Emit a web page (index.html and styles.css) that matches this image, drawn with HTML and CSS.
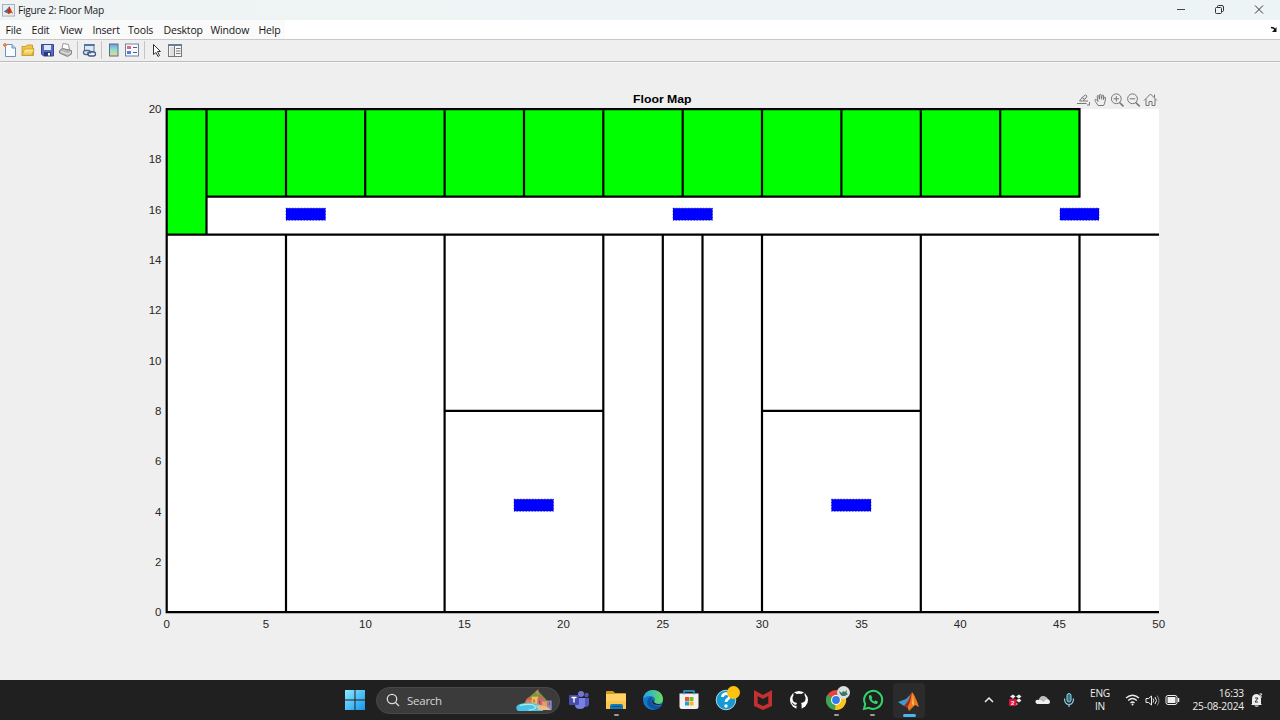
FILE: index.html
```html
<!DOCTYPE html>
<html lang="en">
<head>
<meta charset="utf-8">
<title>Figure 2: Floor Map</title>
<link rel="stylesheet" href="styles.css">
</head>
<body>
<div class="screen">
<header class="titlebar">
  <svg class="app-icon" viewBox="0 0 14 14"><rect x=".5" y=".5" width="13" height="12.5" fill="#e8edf2" stroke="#a5adb7"/><path d="M2 8l3-2 3-3.5L5.5 10z" fill="#376faa"/><path d="M5 9l3-6.500 4 8-2-1-3 1.500z" fill="#cf4a18"/><path d="M8 2.500L7 9l1 1z" fill="#7e2119"/></svg>
  <span class="caption">Figure 2: Floor Map</span>
  <svg class="win-controls" viewBox="0 0 100 20" fill="none" stroke="#333"><path d="M7 9.500h8" stroke-width=".9"/><rect x="45.500" y="7.500" width="6" height="6" rx="1"/><path d="M47.500 7.500V6.500q0-1 1-1h3.500q1.500 0 1.500 1.500v3.500q0 1-1 1h-1"/><path d="M85 5.500l8 8m0-8l-8 8"/></svg>
</header>
<nav class="menubar">
  <div class="menus"><span class="m1">File</span><span class="m2">Edit</span><span class="m3">View</span><span class="m4">Insert</span><span class="m5">Tools</span><span class="m6">Desktop</span><span class="m7">Window</span><span class="m8">Help</span></div>
  <svg class="dock" viewBox="0 0 8 8"><path d="M1 1.500l2.500.5 2 2" fill="none" stroke="#111" stroke-width="1.500"/><path d="M6.500 1v5H2z" fill="#111"/></svg>
</nav>
<div class="toolbar">
  <svg width="190" height="20" viewBox="0 0 190 20">
    <defs>
      <linearGradient id="cbar" x2="0" y2="1"><stop stop-color="#6c9ce8"/><stop offset=".5" stop-color="#8fe0d2"/><stop offset="1" stop-color="#f5d77b"/></linearGradient>
      <linearGradient id="fold" x2="0" y2="1"><stop stop-color="#fff3a5"/><stop offset="1" stop-color="#e7bd3e"/></linearGradient>
    </defs>
    <path d="M5.500 4.500h6.500l3.500 3.500v8.500h-10z" fill="#f8fcff" stroke="#6f91bc"/><path d="M12 4.500v3.500h3.500" fill="#b8d4ed" stroke="#6f91bc"/><path d="M3 5h4M5 3v4" stroke="#e68755" stroke-width="2"/>
    <path d="M22 15.500v-9h4l1-1.500h5.500v3h1v7.500z" fill="#f4c640" stroke="#c29022" stroke-width=".8"/><path d="M22 15.500l2.500-6.500h9.500l-2 6.500z" fill="url(#fold)" stroke="#c69a2d" stroke-width=".8"/>
    <path d="M41.500 4.500h12v11.500h-10l-2-2z" fill="#5968c4" stroke="#3a458e"/><path d="M44 5h7v5h-7z" fill="#d9e8fb"/><path d="M44 12h7v4h-7z" fill="#293a7b"/><path d="M48 13h2v2.500h-2z" fill="#fff"/>
    <path d="M62 9l1-5.500 5.500 1 1 5.500z" fill="#fff" stroke="#999"/><path d="M59.500 10.500l3-2 9 2v3.500l-4 2.500-8-3.500z" fill="#b5b5b5" stroke="#858585"/><path d="M61 11.500l7 2.500 3-2" fill="none" stroke="#eee"/>
    <path d="M77.500 1v18M101.500 1v18M144.500 1v18" stroke="#c4c4c4"/>
    <rect x="84.500" y="4.500" width="9.500" height="7" fill="#dbe8f7" stroke="#56739e"/><path d="M84 5h10.500" stroke="#56739e" stroke-width="2"/><rect x="83.500" y="10.500" width="7" height="4" rx="2" fill="#dfe9f4" stroke="#526786" stroke-width="1.300"/><rect x="88" y="12" width="7.500" height="4" rx="2" fill="#eaf2fd" stroke="#435a7d" stroke-width="1.300"/><path d="M87 13h4" stroke="#435a7d"/>
    <rect x="109.500" y="4" width="8.500" height="12" fill="url(#cbar)" stroke="#5b6d85"/>
    <rect x="125.500" y="4" width="13" height="12" fill="#f8faff" stroke="#7280a0"/><path d="M127 6h4v3h-4z" fill="#e6677c"/><path d="M127 11h4v3h-4z" fill="#567de4"/><path d="M133 7.500h4m-4 5h4" stroke="#535c79"/>
    <path d="M153.500 4.500v10l2.500-2 2 4 1.500-1-2-4h3z" fill="#fff" stroke="#333"/>
    <rect x="168.500" y="4.500" width="13" height="12" fill="#f7f7f7" stroke="#777"/><path d="M168 5h14" stroke="#657ca0" stroke-width="2"/><path d="M170 7h4v9h-4z" fill="#e0e0e0"/><path d="M174.500 6v10" stroke="#777"/><path d="M176 8.500h4.500m-4.500 2.500h4.500m-4.500 2.500h4.500" stroke="#777"/>
  </svg>
</div>
<main class="figure">
<svg width="1280" height="618" viewBox="0 62 1280 618">
  <path d="M167 109h992v503H167z" fill="#fff"/>
  <path d="M167 109h912.500v87.600H206.500v38H167z" fill="#0f0"/>
  <g fill="none" stroke="#000" stroke-width="2.200">
    <path d="M1159 612.200H166.700V109.100H1079.500V196.600H206.500"/>
    <path d="M166.700 234.700H1159M206.500 109v125.700"/>
    <path d="M286 109v87.600M365.200 109v87.600M444.600 109v87.600M524 109v87.600M603.300 109v87.600M682.700 109v87.600M762 109v87.600M841.400 109v87.600M920.800 109v87.600M1000.200 109v87.600"/>
    <path d="M286 234.700v377.500M444.600 234.700v377.500M603.300 234.700v377.500M662.800 234.700v377.500M702.500 234.700v377.500M762 234.700v377.500M920.800 234.700v377.500M1079.500 234.700v377.500M444.600 410.800h158.700M762 410.800h158.800"/>
  </g>
  <g fill="#00f" stroke="#0000a8" stroke-width=".6" stroke-dasharray="1.500 1.500">
    <rect x="286" y="208.200" width="39.500" height="12"/><rect x="673" y="208.200" width="39.500" height="12"/><rect x="1060" y="208.200" width="39" height="12"/><rect x="514" y="499.200" width="39.500" height="12"/><rect x="831.500" y="499.200" width="39.500" height="12"/>
  </g>
  <text class="plot-title" x="662.300" y="103" textLength="58.500" lengthAdjust="spacingAndGlyphs">Floor Map</text>
  <g class="tick ylab">
    <text x="161.500" y="113">20</text><text x="161.500" y="163.300">18</text><text x="161.500" y="213.800">16</text><text x="161.500" y="264">14</text><text x="161.500" y="314.400">12</text><text x="161.500" y="364.700">10</text><text x="161.500" y="415">8</text><text x="161.500" y="465.300">6</text><text x="161.500" y="515.600">4</text><text x="161.500" y="565.900">2</text><text x="161.500" y="616.300">0</text>
  </g>
  <g class="tick xlab">
    <text x="166.700" y="628">0</text><text x="266" y="628">5</text><text x="365.500" y="628">10</text><text x="464.500" y="628">15</text><text x="563.500" y="628">20</text><text x="662.800" y="628">25</text><text x="762.200" y="628">30</text><text x="861.600" y="628">35</text><text x="960.200" y="628">40</text><text x="1059.500" y="628">45</text><text x="1158.700" y="628">50</text>
  </g>
  <g fill="none" stroke="#777" stroke-width="1">
    <path d="M1077 103.500h9.500M1079.500 101l3-4 3-2 1.500 1-1 2-3.500 3zM1082 97.500l2.500 1.500M1083 101h5M1089.500 102v3h-2.500"/>
    <path d="M1098 105.500c-1-2-2.500-3.500-3-5-.5-1.200 1-1.600 1.600-.6l1.400 1.600-.8-5c-.2-1.200 1.300-1.400 1.600-.3l.7 3v-4c0-1.200 1.600-1.200 1.700 0l.2 4 .7-3.500c.3-1.200 1.700-.8 1.600.3l-.4 3.700.8-2c.5-1.100 1.700-.6 1.500.4-.4 2.900-.8 5.200-2 7.400z"/>
    <circle cx="1116.300" cy="98.800" r="4.900"/><path d="M1119.500 102.500l4 3.800" stroke-width="1.600"/><path d="M1113.500 98.800h5.500m-2.700-2.700v5.500"/>
    <circle cx="1132.500" cy="98.800" r="4.900"/><path d="M1135.700 102.500l4 3.800" stroke-width="1.600"/><path d="M1129.700 98.800h5.500"/>
    <path d="M1144 100.500l6.500-6.500 6.500 6.500M1146 99v6.500h3v-4h3v4h3V99M1154.500 97.500v-3"/>
  </g>
</svg>
</main>
<footer class="taskbar">
  <div class="start"><svg viewBox="0 0 20 20"><defs><linearGradient id="win" x2="1" y2="1"><stop stop-color="#8ceaff"/><stop offset="1" stop-color="#1396ed"/></linearGradient></defs><path fill="url(#win)" d="M0 0h9.500v9.500H0zM10.500 0H20v9.500h-9.500zM0 10.500h9.500V20H0zM10.500 10.500H20V20h-9.500z"/></svg></div>
  <div class="search">
    <svg class="lens" viewBox="0 0 14 14" fill="none" stroke="#ddd" stroke-width="1.300"><circle cx="6" cy="6" r="4.700"/><path d="M9.500 9.500l3.500 3.500"/></svg>
    <span>Search</span>
    <svg class="scene" viewBox="0 0 38 24"><path d="M5 18L15 7l7-6 10 11 5 7z" fill="#7c9444"/><path d="M20 3l3-3v7z" fill="#c38f57"/><path d="M10 11h7v7h-7z" fill="#ed7552"/><path d="M16 8h7v9h-7z" fill="#f5bc52"/><path d="M22 10h7v8h-7z" fill="#d0657a"/><path d="M27 13h6v8h-6z" fill="#ef985d"/><path d="M32 12h5v10h-5z" fill="#8f83ba"/><path d="M10 11l3.500-3 3.500 3M22 10l3.500-3 3.500 3" fill="#c66a4e"/><path d="M18 11h1v3h-1M24 12h1v3h-1M34 14h1v3h-1" fill="#574f66"/><path d="M0 19c1-4 10-5 19-4 6 0 8 3 9 8H4c-3 0-4-1-4-4z" fill="#4ac3e5"/><path d="M4 17c8-2 15-1 16 2 1 1-3 3-7 3" fill="none" stroke="#a7edf2" stroke-width="1.300"/><path d="M20 17q12-1 16 5H23z" fill="#e4c18a"/></svg>
  </div>
  <div class="apps">
    <div class="app"><svg viewBox="0 0 24 24"><circle cx="14" cy="6" r="3" fill="#7476d7"/><circle cx="19.500" cy="7" r="2.200" fill="#5357b4"/><path d="M15 10h7v6q0 3-4 3h-3z" fill="#545abc"/><path d="M8 10h10v7q0 4-5 4t-5-4z" fill="#7880e1"/><rect x="2" y="7" width="10" height="10" rx="1" fill="#474eae"/><path d="M4.500 9.500h5M7 9.500v5" stroke="#fff" stroke-width="1.400"/></svg></div>
    <div class="app running"><svg viewBox="0 0 24 24"><path d="M2 4q0-1 1-1h6l2 2h10q1 0 1 1v6H2z" fill="#d49b21"/><path d="M2 6h20v14q0 1-1 1H3q-1 0-1-1z" fill="#ffd267"/><path d="M2 13h20v7q0 1-1 1H3q-1 0-1-1z" fill="#fbc64a"/><path d="M6 21v-3q0-2 2-2h9q2 0 2 2v3z" fill="#1679b8"/><path d="M8 18.500h9" stroke="#0c517b"/></svg></div>
    <div class="app"><svg viewBox="0 0 24 24"><defs><linearGradient id="edge"><stop stop-color="#20a3ef"/><stop offset="1" stop-color="#6bdd57"/></linearGradient></defs><circle cx="12" cy="12" r="10" fill="#1478ca"/><path d="M2 11C3 4 8 2 12 2c6 0 10 4 10 9 0 4-3 5-6 5s-4-1-3-2c2-2 1-6-4-6-4 0-6 2-7 3z" fill="url(#edge)"/><path d="M9 9c-6 5-2 13 7 12 2-.4 4-2 5-4-3 2-8 1-10-2-1-2-1-4 1-6z" fill="#1054a1"/><path d="M12 11c-2 3 0 6 5 6 1 0 3 0 4-1 2-1-1 1-4 0-3-.5-5-2-5-5z" fill="#202020"/></svg></div>
    <div class="app"><svg viewBox="0 0 24 24"><path d="M2.500 5.500h19v13q0 2.500-2.500 2.500H5q-2.500 0-2.500-2.500z" fill="#f1f1f1"/><path d="M7 6.500V3h10v3.500" fill="none" stroke="#35a4df" stroke-width="1.300"/><path fill="#f05126" d="M8 9h4v4H8z"/><path fill="#80b927" d="M12.500 9h4v4h-4z"/><path fill="#16a2e4" d="M8 13.500h4v4H8z"/><path fill="#f8b914" d="M12.500 13.500h4v4h-4z"/></svg></div>
    <div class="app"><svg viewBox="0 0 24 24" overflow="visible"><circle cx="12" cy="12" r="9.800" fill="#159bd3" stroke="#d8f0f8" stroke-width=".8"/><path d="M8.500 9c0-5 8-4 7 0-.5 2-3.500 2-3.500 5" fill="none" stroke="#fff" stroke-width="2.800"/><circle cx="12" cy="18" r="1.700" fill="#fff"/><circle cx="19.500" cy="4.500" r="6.500" fill="#ffc20e"/></svg></div>
    <div class="app"><svg viewBox="0 0 24 24"><path d="M3 2l9 5 9-5v16l-9 4-9-4zM6.700 8v7.500L12 18l5.300-2.500V8L12 11z" fill="#c5302f" fill-rule="evenodd"/></svg></div>
    <div class="app"><svg viewBox="0 0 24 24"><circle cx="12" cy="12" r="9" fill="#fff"/><path d="M9.500 21v-3.500q-3 .7-4-1.500-.5-1-1.300-1.400c1.500-.4 2 1.500 3 2q1.300.6 2.300-.3.1-1 .7-1.300c-3-.4-4.700-2-4.700-4.600q0-1.700 1-2.900-.4-1.300.2-2.700 1.500 0 3 1.200 2.400-.7 4.700 0 1.500-1.200 3-1.200.6 1.400.2 2.700 1 1.200 1 2.900c0 2.600-1.700 4.200-4.700 4.600.6.500.7 1 .7 2.300V21z" fill="#202020"/></svg></div>
    <div class="app running"><svg viewBox="0 0 24 24" overflow="visible"><circle cx="12" cy="12" r="10" fill="#e7443a"/><path d="M12 12L3.300 7A10 10 0 0 0 11 22z" fill="#36a852"/><path d="M12 12l9-4.500A10 10 0 0 1 11 22z" fill="#fbc51b"/><path d="M12 7h9H3.500z" fill="#e7443a"/><circle cx="12" cy="12" r="5" fill="#fff"/><circle cx="12" cy="12" r="3.900" fill="#327ee6"/><circle cx="19.500" cy="4.500" r="6.500" fill="#d9e0df"/><path d="M15 3l3 2 1-2 2 1 2-2-.5 3 1.500 1-3 2h-3l-2-2z" fill="#3c7564"/></svg></div>
    <div class="app running"><svg viewBox="0 0 24 24" fill="none" stroke="#30d46b" stroke-width="2"><path d="M3 21l1.200-5A9 9 0 1 1 8 19.800z"/><path d="M8 7.500c-1 5 4 9 8 8.500l1-2.500-2.500-1-1.500 1q-2-1-2.500-2.700l.8-1L10 7z" fill="#30d46b" stroke="none"/></svg></div>
    <div class="app active"><svg viewBox="0 0 24 24"><path d="M1 13l8-3 5-5-3 11-4 1z" fill="#3d9ad0"/><path d="M7 17l3-4 5-10q3 3 7 15l-4-2-6 6-2-5z" fill="#ed7624"/><path d="M15 3l-2 10-3 6-3-2 4-5z" fill="#9f2922"/><path d="M16 4l-1 11 2 2z" fill="#ffc24b"/></svg></div>
  </div>
  <div class="tray">
    <svg viewBox="0 0 100 40" width="100" height="40">
      <path d="M5 22l4-4 4 4" fill="none" stroke="#eee" stroke-width="1.500"/><path d="M30 16.500l3-2 2.500 2-2.500 2zM36 16.500l3-2 2.500 2-2.500 2zM30 20.500l3-2 2.500 2-2.500 2zM36 20.500l3-2 2.500 2-2.500 2zM33 24l2.500-1.500L38 24l-2.500 1.500z" fill="#eee"/><rect x="29" y="19" width="7.500" height="7" rx="1" fill="#df1238"/><text x="32.700" y="25" class="badge">2</text><path d="M57 24q-2-1-1.500-3 1-2 3.500-1 2-5.500 6.500-3 2 .5 2 2 2.500.5 2.500 3 0 2-2 2z" fill="#f0f0f0"/><path d="M59 19q2-4 6-2.500 2 .5 2.500 2.500-3 1-4 3z" fill="#bcbcbc"/><rect x="87" y="13.500" width="4" height="8.500" rx="2" fill="#377589" stroke="#8ad4e5"/><path d="M84.500 18.500q0 6 4.500 6t4.500-6M89 24.500V27" fill="none" stroke="#8ad4e5" stroke-width="1.200"/>
    </svg>
    <div class="language">ENG<br>IN</div>
    <svg class="status" viewBox="0 0 58 20" fill="none" stroke="#eee"><path d="M2 8q6.500-5.500 13 0M4.200 10.500q4.300-4 8.600 0M6.500 13q2-2 4 0" stroke-width="1.300"/><circle cx="8.500" cy="14.500" r="1" fill="#eee" stroke="none"/><path d="M22 8.500h2.500l3-2.500v9l-3-2.500H22zM29 8.500q1.500 2 0 4M31 7q3 3.500 0 7"/><path d="M33 5.500q4 5 0 10" stroke="#888"/><rect x="42" y="5.500" width="11" height="9" rx="2"/><rect x="43.500" y="7" width="8" height="6" fill="#eee" stroke="none"/><path d="M54.500 8v4" stroke-width="1.500"/></svg>
    <div class="clock">16:33<br>25-08-2024</div>
    <svg class="bell" viewBox="0 0 14 16"><path d="M2 12V7q0-5 5-5 4 1 4 5v5l1 1H1zM4 13.500h5q-2 2.500-5 0z" fill="#eee"/><path d="M5 6h3l-3 4h3" fill="none" stroke="#333"/><path d="M9.500 2h2.500L9.500 5H12" fill="none" stroke="#eee"/></svg>
  </div>
</footer>
</div>
</body>
</html>
```
FILE: styles.css
```css
* { box-sizing: border-box; }
body { margin: 0; overflow: hidden; background: #efefef; }
svg { display: block; flex-shrink: 0; }
.screen { width: 1280px; height: 720px; display: flex; flex-direction: column; }
.titlebar { height: 20px; display: flex; align-items: center; background: linear-gradient(90deg, #eff3f4, #edf4f6); font: 10px "Open Sans", sans-serif; color: #1c1c1c; padding-left: 2px; }
.app-icon { width: 13px; height: 13px; margin-right: 3px; }
.caption { font-size: 10.2px; letter-spacing: -.28px; white-space: nowrap; }
.win-controls { width: 100px; height: 20px; margin-left: auto; margin-right: 10px; }
.menubar { height: 20px; display: flex; justify-content: space-between; background: #fff; border-bottom: 1px solid #c9c9c9; }
.menus { display: flex; align-items: center; width: 285px; padding-left: 5.500px; background: #fafafa; font: 10.500px "Open Sans", sans-serif; color: #161616; letter-spacing: -.18px; }
.menus span { flex: none; white-space: nowrap; }
.m1 { width: 26px; }
.m2 { width: 28.500px; }
.m3 { width: 32.500px; }
.m4 { width: 35.500px; }
.m5 { width: 35.500px; }
.m6 { width: 47px; }
.m7 { width: 48px; }
.dock { width: 8px; height: 8px; margin: 6px 2px 0 0; }
.toolbar { height: 22px; background: #efefef; border-bottom: 1px solid #bdbdbd; }
.figure { height: 618px; background: #efefef; border-top: 1px solid #f8f8f8; }
.figure svg { margin-top: -1px; }
.tick { font: 11.500px "Liberation Sans", Arial, sans-serif; fill: #262626; }
.ylab { text-anchor: end; }
.xlab { text-anchor: middle; }
.plot-title { font: bold 11.500px "Liberation Sans", Arial, sans-serif; text-anchor: middle; }
.taskbar { height: 40px; display: flex; align-items: center; padding-left: 345px; background: #202020; color: #eee; font-family: "Open Sans", sans-serif; }
.start { width: 31px; flex: none; }
.start svg { width: 20px; height: 20px; }
.search { width: 184px; height: 27px; flex: none; display: flex; align-items: center; padding: 0 5px 0 9px; border: 1px solid #494949; border-radius: 14px; background: #3b3b3b; color: #d5d5d5; font-size: 11.500px; letter-spacing: -.25px; }
.lens { width: 14px; height: 14px; margin-right: 7px; }
.scene { width: 39px; height: 23px; margin-left: auto; }
.apps { display: flex; height: 40px; width: 369px; flex: none; padding-left: 1px; }
.app { position: relative; width: 36.700px; height: 40px; flex: none; display: grid; place-items: center; }
.app svg { width: 24px; height: 24px; }
.running::after, .active::after { content: ""; position: absolute; bottom: 4px; width: 5px; height: 2px; border-radius: 2px; background: #9b9b9b; }
.active { background: #2b2b2b; border-radius: 4px; height: 35px; margin: 3px 0 2px 1.500px; width: 32px; }
.active::after { bottom: 1px; left: 10px; width: 13px; height: 3px; background: #4cb7ee; }
.tray { display: flex; align-items: center; height: 40px; margin-left: 51px; flex: none; }
.language, .clock { font-size: 10.200px; line-height: 13px; flex: none; }
.language { width: 40px; text-align: center; letter-spacing: -.3px; }
.clock { width: 62px; text-align: right; letter-spacing: -.16px; white-space: nowrap; }
.status { width: 58px; height: 20px; margin-left: 4px; }
.bell { width: 14px; height: 16px; margin-left: 6px; }
.badge { font: bold 6px "Liberation Sans", sans-serif; fill: #fff; text-anchor: middle; }
```
